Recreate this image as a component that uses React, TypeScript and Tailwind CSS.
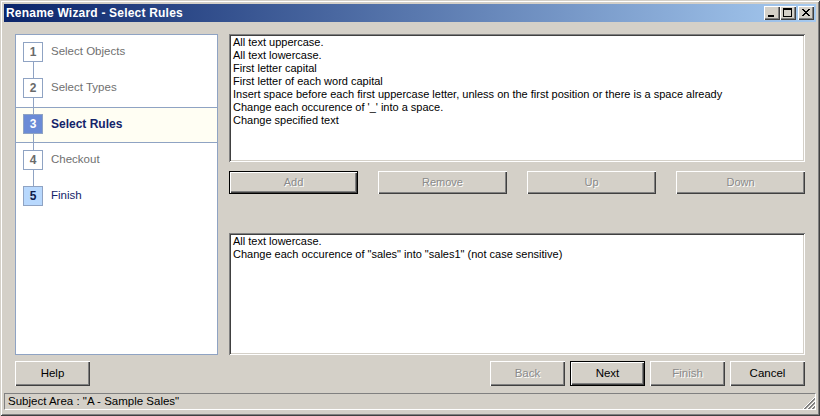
import React from "react";

type StepState = "done" | "active" | "todo" | "next";

const steps: { n: number; label: string; state: StepState }[] = [
  { n: 1, label: "Select Objects", state: "done" },
  { n: 2, label: "Select Types", state: "done" },
  { n: 3, label: "Select Rules", state: "active" },
  { n: 4, label: "Checkout", state: "todo" },
  { n: 5, label: "Finish", state: "next" },
];

const availableRules = [
  "All text uppercase.",
  "All text lowercase.",
  "First letter capital",
  "First letter of each word capital",
  "Insert space before each first uppercase letter, unless on the first position or there is a space already",
  "Change each occurence of '_' into a space.",
  "Change specified text",
];

const chosenRules = [
  "All text lowercase.",
  'Change each occurence of "sales" into "sales1" (not case sensitive)',
];

function CaptionButton({ children, className = "" }: { children: React.ReactNode; className?: string }) {
  return (
    <div
      className={`w-[16px] h-[14px] bg-[#d4d0c8] flex items-center justify-center shadow-[inset_1px_1px_0_#ffffff,inset_-1px_-1px_0_#404040,inset_-2px_-2px_0_#808080] ${className}`}
    >
      {children}
    </div>
  );
}

function WinButton({
  label,
  disabled = false,
  isDefault = false,
  className = "",
}: {
  label: string;
  disabled?: boolean;
  isDefault?: boolean;
  className?: string;
}) {
  return (
    <div className={`flex ${isDefault ? "border border-black" : ""} ${className}`}>
      <div className="flex-1 flex items-center justify-center bg-[#d4d0c8] shadow-[inset_1px_1px_0_#ffffff,inset_-1px_-1px_0_#404040,inset_-2px_-2px_0_#808080]">
        <span
          className={
            disabled
              ? "text-[#8a8a8a] [text-shadow:1px_1px_0_#ffffff]"
              : "text-black"
          }
        >
          {label}
        </span>
      </div>
    </div>
  );
}

function ListBox({ items, className = "" }: { items: string[]; className?: string }) {
  return (
    <div
      className={`bg-white pl-[4px] pt-[2px] shadow-[inset_1px_1px_0_#808080,inset_-1px_-1px_0_#ffffff,inset_2px_2px_0_#404040,inset_-2px_-2px_0_#d4d0c8] ${className}`}
    >
      {items.map((t) => (
        <div key={t} className="leading-[13px] h-[13px] whitespace-nowrap">
          {t}
        </div>
      ))}
    </div>
  );
}

function StepBox({ n, state }: { n: number; state: StepState }) {
  const look =
    state === "active"
      ? "bg-[#6b8bd6] text-white"
      : state === "next"
      ? "bg-[#b8d8fd] text-[#0d1a4a]"
      : "bg-white text-[#6a6a6a]";
  return (
    <div
      className={`w-[20px] h-[20px] border border-[#8fa3c3] flex items-center justify-center font-bold text-[12px] ${look}`}
    >
      {n}
    </div>
  );
}

function StepRow({ step, first, last }: { step: (typeof steps)[number]; first: boolean; last: boolean }) {
  const active = step.state === "active";
  const labelLook = active
    ? "font-bold text-[12px] text-[#14246a]"
    : step.state === "next"
    ? "text-[11.5px] text-[#14246a]"
    : "text-[11.5px] text-[#707070]";
  return (
    <div
      className={`flex h-[36px] ${
        active ? "bg-[#fffef3] shadow-[inset_0_1px_0_#8fa3c3,inset_0_-1px_0_#8fa3c3]" : ""
      }`}
    >
      <div className="w-[35px] pl-[7px] flex flex-col">
        <div className={`ml-[10px] w-px h-[7px] ${first ? "" : "bg-[#8fa3c3]"}`} />
        <StepBox n={step.n} state={step.state} />
        <div className={`ml-[10px] w-px flex-1 ${last ? "" : "bg-[#8fa3c3]"}`} />
      </div>
      <div className={`flex items-center pb-[2px] ${labelLook}`}>{step.label}</div>
    </div>
  );
}

export default function App() {
  return (
    <div className="w-[820px] h-[416px] bg-[#d4d0c8] p-[4px] flex flex-col font-['Liberation_Sans',Arial,sans-serif] text-[11px] text-black shadow-[inset_1px_1px_0_#d4d0c8,inset_-1px_-1px_0_#404040,inset_2px_2px_0_#ffffff,inset_-2px_-2px_0_#808080]">
      {/* caption */}
      <div className="h-[18px] flex items-center pl-[2px] pr-[2px] bg-[linear-gradient(to_right,#0a246a,#a6caf0)]">
        <span className="text-white font-bold text-[12px] tracking-[0.2px]">Rename Wizard - Select Rules</span>
        <div className="ml-auto flex items-center">
          <CaptionButton>
            <svg width="16" height="14" viewBox="0 0 16 14" shapeRendering="crispEdges">
              <rect x="4" y="9" width="6" height="2" fill="#000" />
            </svg>
          </CaptionButton>
          <CaptionButton>
            <svg width="16" height="14" viewBox="0 0 16 14" shapeRendering="crispEdges">
              <rect x="3" y="2" width="9" height="2" fill="#000" />
              <rect x="3" y="2" width="1" height="9" fill="#000" />
              <rect x="11" y="2" width="1" height="9" fill="#000" />
              <rect x="3" y="10" width="9" height="1" fill="#000" />
            </svg>
          </CaptionButton>
          <CaptionButton className="ml-[2px]">
            <svg width="16" height="14" viewBox="0 0 16 14" shapeRendering="crispEdges">
              {[0, 1, 2, 3, 4, 5, 6].map((i) => (
                <React.Fragment key={i}>
                  <rect x={4 + i} y={3 + i} width="2" height="1" fill="#000" />
                  <rect x={10 - i} y={3 + i} width="2" height="1" fill="#000" />
                </React.Fragment>
              ))}
            </svg>
          </CaptionButton>
        </div>
      </div>

      {/* wizard body */}
      <div className="flex flex-col px-[11px] pt-[12px]">
        <div className="flex gap-[11px] h-[321px]">
          <div className="w-[203px] bg-white border border-[#8fa3c3] flex flex-col">
            {steps.map((s, i) => (
              <StepRow key={s.n} step={s} first={i === 0} last={i === steps.length - 1} />
            ))}
          </div>

          <div className="flex-1 flex flex-col">
            <ListBox items={availableRules} className="h-[128px]" />
            <div className="mt-[9px] h-[23px] flex justify-between">
              <WinButton label="Add" disabled isDefault className="w-[129px]" />
              <WinButton label="Remove" disabled className="w-[129px]" />
              <WinButton label="Up" disabled className="w-[129px]" />
              <WinButton label="Down" disabled className="w-[129px]" />
            </div>
            <ListBox items={chosenRules} className="mt-auto h-[122px]" />
          </div>
        </div>

        <div className="mt-[6px] h-[25px] flex text-[11.5px]">
          <WinButton label="Help" className="w-[75px]" />
          <div className="ml-auto flex gap-[5px]">
            <WinButton label="Back" disabled className="w-[75px]" />
            <WinButton label="Next" isDefault className="w-[75px]" />
            <WinButton label="Finish" disabled className="w-[75px]" />
            <WinButton label="Cancel" className="w-[75px]" />
          </div>
        </div>
      </div>

      {/* status bar */}
      <div className="relative mt-[7px] h-[17px] flex items-center pl-[3px] text-[11.5px] border border-t-[#808080] border-l-[#808080] border-b-white border-r-white">
        <span>Subject Area : "A - Sample Sales"</span>
        <svg
          className="absolute right-0 bottom-0"
          width="12"
          height="12"
          viewBox="0 0 12 12"
          shapeRendering="crispEdges"
        >
          {[0, 4, 8].map((o) => (
            <React.Fragment key={o}>
              {Array.from({ length: 12 - o }).map((_, k) => (
                <React.Fragment key={k}>
                  <rect x={o + k} y={11 - k} width="1" height="1" fill="#ffffff" />
                  <rect x={o + k + 1} y={11 - k} width="1" height="1" fill="#808080" />
                  <rect x={o + k + 2} y={11 - k} width="1" height="1" fill="#808080" />
                </React.Fragment>
              ))}
            </React.Fragment>
          ))}
        </svg>
      </div>
    </div>
  );
}
